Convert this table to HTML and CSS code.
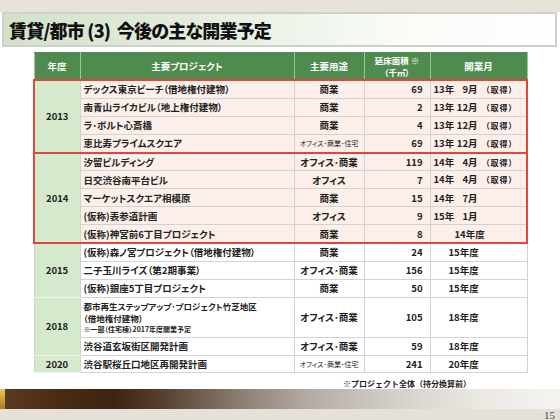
FILE: index.html
```html
<!DOCTYPE html>
<html lang="ja">
<head>
<meta charset="utf-8">
<link rel="stylesheet" href="styles.css">
</head>
<body>
<div class="slide">
  <div class="topstrip"></div>
  <div class="titlebox"><h1>賃貸/都市 (3)&nbsp; 今後の主な開業予定</h1></div>
  <table class="plan">
    <colgroup>
      <col class="c-yr"><col class="c-pj"><col class="c-use"><col class="c-area"><col class="c-mo">
    </colgroup>
    <thead>
      <tr>
        <th>年度</th><th>主要プロジェクト</th><th>主要用途</th><th class="h2">延床面積 ※<br>（千㎡）</th><th>開業月</th>
      </tr>
    </thead>
    <tbody>
      <tr class="pk gt">
        <td class="yr gl gb" rowspan="4">2013</td>
        <td class="pj">デックス東京ビーチ（借地権付建物）</td><td class="use">商業</td><td class="area">69</td>
        <td class="mo gr"><span class="y">13年</span><span class="m">9月</span><span class="n">（取得）</span></td>
      </tr>
      <tr class="pk">
        <td class="pj">南青山ライカビル（地上権付建物）</td><td class="use">商業</td><td class="area">2</td>
        <td class="mo gr"><span class="y">13年</span><span class="m">12月</span><span class="n">（取得）</span></td>
      </tr>
      <tr class="pk">
        <td class="pj">ラ･ボルト心斎橋</td><td class="use">商業</td><td class="area">4</td>
        <td class="mo gr"><span class="y">13年</span><span class="m">12月</span><span class="n">（取得）</span></td>
      </tr>
      <tr class="pk gbr">
        <td class="pj">恵比寿プライムスクエア</td><td class="use sm">オフィス･商業･住宅</td><td class="area">69</td>
        <td class="mo gr"><span class="y">13年</span><span class="m">12月</span><span class="n">（取得）</span></td>
      </tr>
      <tr class="pk gt">
        <td class="yr gl gb" rowspan="5">2014</td>
        <td class="pj">汐留ビルディング</td><td class="use">オフィス･商業</td><td class="area">119</td>
        <td class="mo gr"><span class="y">14年</span><span class="m">4月</span><span class="n">（取得）</span></td>
      </tr>
      <tr class="pk">
        <td class="pj">日交渋谷南平台ビル</td><td class="use">オフィス</td><td class="area">7</td>
        <td class="mo gr"><span class="y">14年</span><span class="m">4月</span><span class="n">（取得）</span></td>
      </tr>
      <tr class="pk">
        <td class="pj">マーケットスクエア相模原</td><td class="use">商業</td><td class="area">15</td>
        <td class="mo gr"><span class="y">14年</span><span class="m">7月</span></td>
      </tr>
      <tr class="pk">
        <td class="pj">(仮称)表参道計画</td><td class="use">オフィス</td><td class="area">9</td>
        <td class="mo gr"><span class="y">15年</span><span class="m">1月</span></td>
      </tr>
      <tr class="pk gbr">
        <td class="pj">(仮称)神宮前6丁目プロジェクト</td><td class="use">商業</td><td class="area">8</td>
        <td class="mo gr fy2">14年度</td>
      </tr>
      <tr>
        <td class="yr" rowspan="3">2015</td>
        <td class="pj">(仮称)森ノ宮プロジェクト（借地権付建物）</td><td class="use">商業</td><td class="area">24</td>
        <td class="mo fy">15年度</td>
      </tr>
      <tr>
        <td class="pj">二子玉川ライズ（第2期事業）</td><td class="use">オフィス･商業</td><td class="area">156</td>
        <td class="mo fy">15年度</td>
      </tr>
      <tr>
        <td class="pj">(仮称)銀座5丁目プロジェクト</td><td class="use">商業</td><td class="area">50</td>
        <td class="mo fy">15年度</td>
      </tr>
      <tr class="tall">
        <td class="yr" rowspan="2">2018</td>
        <td class="pj multi"><span class="ln">都市再生ステップアップ･プロジェクト竹芝地区</span><span class="ln">（借地権付建物）</span><span class="ln tiny">※一部（住宅棟）2017年度開業予定</span></td>
        <td class="use">オフィス･商業</td><td class="area">105</td>
        <td class="mo fy">18年度</td>
      </tr>
      <tr>
        <td class="pj">渋谷道玄坂街区開発計画</td><td class="use">オフィス･商業</td><td class="area">59</td>
        <td class="mo fy">18年度</td>
      </tr>
      <tr>
        <td class="yr">2020</td>
        <td class="pj">渋谷駅桜丘口地区再開発計画</td><td class="use sm">オフィス･商業･住宅</td><td class="area">241</td>
        <td class="mo fy">20年度</td>
      </tr>
    </tbody>
  </table>
  <p class="note">※プロジェクト全体（持分換算前）</p>
  <div class="bar"></div>
  <div class="footer"><span class="page">15</span></div>
</div>
</body>
</html>
```
FILE: styles.css
```css
html, body {
  margin: 0;
  padding: 0;
  background: #fff;
}
.slide {
  width: 560px;
  height: 420px;
  display: flex;
  flex-direction: column;
  font-family: "Noto Sans CJK JP", "Noto Sans", sans-serif;
  color: #222;
  overflow: hidden;
}
.topstrip {
  height: 12px;
  flex: none;
  background: #e7e3db;
}
.titlebox {
  flex: none;
  height: 35px;
  margin: 0 3px 0 2px;
  box-sizing: border-box;
  border: 2px solid #cfcfcc;
  background: linear-gradient(to right, #d2e2c9 0%, #e3eddd 35%, #f8fbf6 70%, #ffffff 100%);
  display: flex;
  align-items: center;
  padding-left: 5px;
}
.titlebox h1 {
  margin: 0;
  font-size: 18px;
  font-weight: 900;
  color: #111;
  letter-spacing: -0.8px;
  font-feature-settings: "palt";
}
.plan {
  flex: none;
  margin: 5px 0 0 33px;
  width: 493px;
  border-collapse: collapse;
  table-layout: fixed;
  font-size: 9.5px;
  font-weight: 700;
  font-feature-settings: "palt";
}
.c-yr { width: 46px; }
.c-pj { width: 214px; }
.c-use { width: 70px; }
.c-area { width: 66px; }
.c-mo { width: 97px; }
.plan th {
  height: 26px;
  padding: 0;
  background: #4f8b4e;
  color: #fff;
  font-weight: 700;
  font-size: 9.5px;
  border-left: 1px solid #9fc19b;
  border-right: 1px solid #9fc19b;
  border-top: 1px solid #4f8b4e;
  text-align: center;
  vertical-align: middle;
}
.plan th.h2 {
  font-size: 8.5px;
  line-height: 12.5px;
}
.plan td {
  height: 16.9px;
  padding: 0;
  border: 1px solid #d2d2d2;
  vertical-align: middle;
  white-space: nowrap;
  line-height: 12px;
}
.plan tr.pk td { background: #fcefe9; }
.plan td.yr {
  background: #d5eacd !important;
  text-align: center;
  border-color: #eef6eb #d2d2d2;
}
.plan td.pj { padding-left: 3px; }
.plan td.use { text-align: center; }
.plan td.use.sm { font-size: 7px; font-weight: 400; }
.plan td.area { text-align: right; padding-right: 7px; }
.plan td.mo { padding-left: 3px; }
.plan td.mo .y { display: inline-block; width: 23px; }
.plan td.mo .m { display: inline-block; width: 21px; text-align: right; }
.plan td.mo .n { margin-left: 8px; font-size: 8px; letter-spacing: 1px; }
.plan td.fy { padding-left: 18px; }
.plan td.fy2 { padding-left: 24px; }
.plan tr.tall td { height: 39px; }
.plan td.multi { font-size: 8.5px; }
.plan td.multi .ln { display: block; line-height: 12.4px; }
.plan td.multi .tiny { font-size: 7px; line-height: 10.2px; }

/* red group frames */
.plan tr.gt td { border-top: 2px solid #e0463c; }
.plan tr.gbr td { border-bottom: 2px solid #e0463c; }
.plan td.gb { border-bottom: 2px solid #e0463c !important; }
.plan td.gl { border-left: 2px solid #e0463c !important; }
.plan td.gr { border-right: 2px solid #e0463c; }

.note {
  flex: 1;
  margin: 0;
  padding: 6px 0 0 343px;
  font-size: 8px;
  font-weight: 700;
  line-height: 10px;
}
.bar {
  flex: none;
  height: 20px;
  background:
    linear-gradient(to bottom, #f0c55a, #b07a1e) left / 5px 100% no-repeat,
    linear-gradient(to right, #5c3c22 0%, #4a2c14 10%, #3e2410 20%, #5a4434 30%, #8c7e72 43%, #b3aba3 55%, #d3cec8 70%, #ebe8e4 85%, #f5f3f0 100%);
}
.footer {
  flex: none;
  height: 12px;
  background: #e5e1d9;
  display: flex;
  justify-content: flex-end;
  align-items: center;
  padding-right: 5px;
}
.page {
  font-family: "Liberation Serif", serif;
  font-size: 11px;
  line-height: 12px;
  color: #444;
}
```
